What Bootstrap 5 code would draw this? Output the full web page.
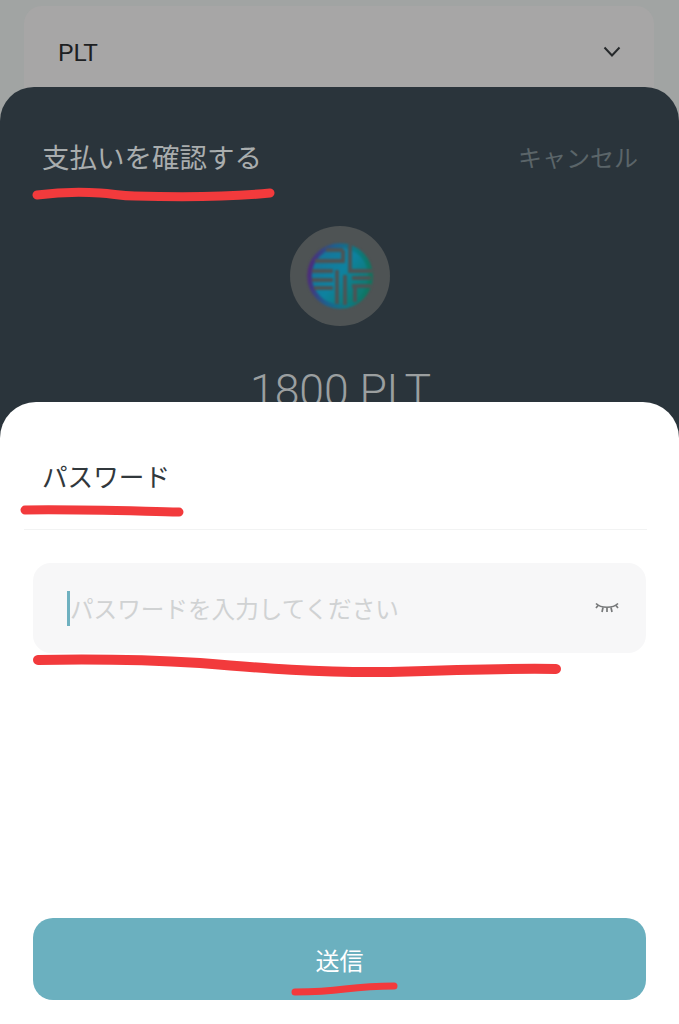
<!doctype html>
<html lang="ja">
  <head>
    <meta charset="utf-8">
    <meta name="viewport" content="width=device-width, initial-scale=1">
    <title>支払いを確認する</title>
    <link href="https://cdn.jsdelivr.net/npm/bootstrap@5.3.2/dist/css/bootstrap.min.css" rel="stylesheet">
    <style>
      html, body {
        height: 100%;
      }
      body {
        background: #a1a4a3;
        font-family: Roboto, "Noto Sans CJK JP", "Noto Sans", sans-serif;
        overflow: hidden;
      }
      .pay-screen {
        width: 679px;
        height: 1024px;
        overflow: hidden;
      }
      .coin-select {
        margin: 6px 25px 0 24px;
        height: 120px;
        padding: 32px 33px 0 34px;
        background: #a7a6a6;
        border-radius: 18px;
        color: #1d2022;
        font-size: 24.5px;
        line-height: 30px;
      }
      .confirm-sheet {
        top: 87px;
        left: 0;
        right: 0;
        bottom: 0;
        padding: 52px 41px 0 42px;
        background: #2a343b;
        border-radius: 34px 34px 0 0;
      }
      .confirm-title {
        color: #a9adae;
        font-size: 27.5px;
        line-height: 40px;
      }
      .confirm-cancel {
        color: #5b6569;
        font-size: 24px;
        line-height: 40px;
      }
      .coin-badge {
        width: 100px;
        height: 100px;
        margin: 47px auto 0;
        background: #4e5354;
      }
      .coin-logo {
        filter: blur(0.8px);
      }
      .confirm-amount {
        margin-top: 39px;
        margin-left: 1px;
        color: #9b9fa0;
        font-size: 44.5px;
        font-weight: 300;
        line-height: 52px;
      }
      .password-sheet {
        top: 402px;
        left: 0;
        right: 0;
        bottom: 0;
        padding: 56px 33px 24px;
        background: #fff;
        border-radius: 36px 36px 0 0;
      }
      .password-title {
        margin: 0 0 0 9px;
        color: #31383c;
        font-size: 25.6px;
        line-height: 40px;
      }
      .password-rule {
        margin: 31px -1px 33px -9px;
        border-top: 1px solid #f2f3f3;
      }
      .password-field {
        height: 90px;
        padding: 0 27px 0 34px;
        background: #f7f7f8;
        border-radius: 18px;
      }
      .password-caret {
        width: 3px;
        height: 35px;
        background: #6fb1c0;
      }
      .password-input {
        padding: 6px 0 0;
        background: transparent;
        border: 0;
        border-radius: 0;
        font-size: 23.6px;
      }
      .password-input::placeholder {
        color: #d0d2d3;
        opacity: 1;
      }
      .password-input:focus {
        background: transparent;
        box-shadow: none;
      }
      .send-btn {
        height: 82px;
        padding-bottom: 1px;
        background: #6bb0bf;
        border: 0;
        border-radius: 20px;
        color: #fff;
        font-size: 24px;
      }
      .marker-layer {
        top: 0;
        left: 0;
        pointer-events: none;
      }
    </style>
  </head>
  <body>
    <div class="pay-screen position-relative">
      <div class="coin-select d-flex justify-content-between align-items-start">
        <span>PLT</span>
        <svg class="mt-2" width="18" height="12" viewBox="0 0 18 12" fill="none" stroke="#26292b" stroke-width="2">
          <path d="M1.5 1.5 9 9.5l7.500-8"/>
        </svg>
      </div>

      <div class="confirm-sheet position-absolute">
        <div class="d-flex justify-content-between">
          <span class="confirm-title">支払いを確認する</span>
          <span class="confirm-cancel">キャンセル</span>
        </div>
        <div class="coin-badge rounded-circle d-flex align-items-center justify-content-center">
          <svg class="coin-logo" width="68" height="68" viewBox="0 0 68 68" fill="none">
            <defs>
              <linearGradient id="coinRing" x1="0" y1="0.3" x2="1" y2="0.45">
                <stop offset="0" stop-color="#4d2a7c"/>
                <stop offset="0.35" stop-color="#1f5f8f"/>
                <stop offset="0.7" stop-color="#0b7a86"/>
                <stop offset="1" stop-color="#0e7660"/>
              </linearGradient>
              <linearGradient id="coinFill" x1="0" y1="0" x2="0.9" y2="0.7">
                <stop offset="0" stop-color="#1b6f97"/>
                <stop offset="0.6" stop-color="#0e82a0"/>
                <stop offset="1" stop-color="#0f7a72"/>
              </linearGradient>
            </defs>
            <circle cx="34" cy="34" r="29" fill="url(#coinFill)"/>
            <circle cx="34" cy="34" r="30.500" stroke="url(#coinRing)" stroke-width="4.500"/>
            <g stroke="#4e5354" stroke-width="3.800">
              <path d="M44 3v26h22"/>
              <path d="M37 8v11H9"/>
              <path d="M20 8h17"/>
              <path d="M6 29h21"/>
              <path d="M6 38h21"/>
              <path d="M8 46h19"/>
              <path d="M31 28v34"/>
              <path d="M39 33v30"/>
              <path d="M46 36h19"/>
              <path d="M46 44h19"/>
              <path d="M49 44v16"/>
            </g>
          </svg>
        </div>
        <div class="confirm-amount text-center">1800 PLT</div>
      </div>

      <div class="password-sheet position-absolute d-flex flex-column">
        <h2 class="password-title fw-normal">パスワード</h2>
        <div class="password-rule"></div>
        <div class="password-field d-flex align-items-center">
          <span class="password-caret flex-shrink-0"></span>
          <input class="password-input form-control" type="password" placeholder="パスワードを入力してください">
          <svg class="flex-shrink-0 ms-2" width="24" height="14" viewBox="0 0 24 14" fill="none" stroke="#77797a" stroke-width="1.700">
            <path d="M1 2.500C6 7.500 18 7.500 23 2.500"/>
            <path d="M3 4.500 1 7M8 6.500 7 11M16 6.500l1 4.500M21 4.500 23 7M12 7v4"/>
          </svg>
        </div>
        <button class="send-btn btn w-100 mt-auto" type="button">送信</button>
      </div>

      <svg class="marker-layer position-absolute" width="679" height="1024" viewBox="0 0 679 1024" fill="none" stroke="#f23a3c" stroke-linecap="round" stroke-linejoin="round">
        <path stroke-width="9" d="M37 195C60 192 85 192 100 193 115 194 120 196 135 196 170 197 230 197 270 193"/>
        <path stroke-width="9" d="M25 510C70 509 130 511 179 512"/>
        <path stroke-width="10" d="M38 660C90 659 150 660 200 663 260 668 320 673 390 672 450 670 510 668 556 669"/>
        <path stroke-width="7" d="M295 992C315 992 330 991 345 989 362 987 378 986 394 986"/>
      </svg>
    </div>
    <script src="https://cdn.jsdelivr.net/npm/bootstrap@5.3.2/dist/js/bootstrap.bundle.min.js"></script>
  </body>
</html>
